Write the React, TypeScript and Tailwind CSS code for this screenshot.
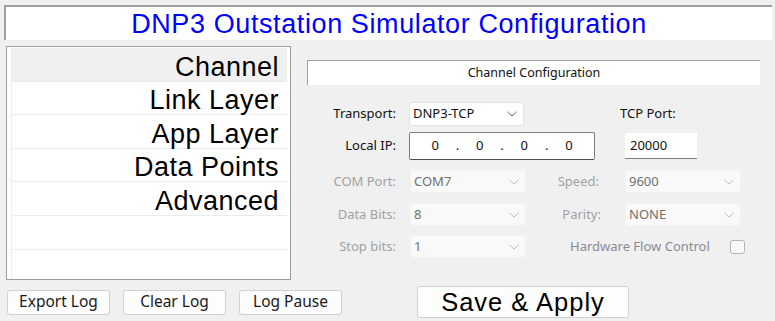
import React from "react";

const NAV_ITEMS = ["Channel", "Link Layer", "App Layer", "Data Points", "Advanced", "", ""];

function Chevron({ color }: { color: string }) {
  return (
    <svg width="10" height="6" viewBox="0 0 10 6" className="shrink-0">
      <polyline points="0.5,0.8 5,5 9.5,0.8" fill="none" stroke={color} strokeWidth="1" />
    </svg>
  );
}

function Dropdown({
  value,
  width,
  disabled,
}: {
  value: string;
  width: string;
  disabled?: boolean;
}) {
  return (
    <div
      className={`flex h-full items-center justify-between rounded-[3px] border pl-[3px] pr-[6px] ${width} ${
        disabled
          ? "border-[#f2f2f2] bg-[#f9f9f9] text-[#707070]"
          : "border-[#e2e2e2] bg-white text-[#111]"
      }`}
    >
      <span>{value}</span>
      <Chevron color={disabled ? "#bdbdbd" : "#6a6a6a"} />
    </div>
  );
}

function Label({ text, width, disabled }: { text: string; width: string; disabled?: boolean }) {
  return (
    <div className={`shrink-0 text-right ${width} ${disabled ? "text-[#a2a2a2]" : "text-[#111]"}`}>
      {text}
    </div>
  );
}

function LogButton({ children }: { children: React.ReactNode }) {
  return (
    <button className="flex h-[25px] w-[103px] items-center justify-center rounded-[3px] border border-[#d0d0d0] bg-[#fdfdfd] text-[15.5px] text-[#1a1a1a] [font-family:'Noto_Sans',sans-serif]">
      {children}
    </button>
  );
}

export default function App() {
  return (
    <div className="h-[321px] w-[775px] overflow-hidden bg-[#f0f0f0] pt-[5px]">
      {/* Title */}
      <div className="ml-[4px] flex h-[35px] w-[768px] items-center justify-center border-l-2 border-t-2 border-[#a0a0a0] bg-white pt-[1px]">
        <span className="text-[27px] tracking-[0.6px] text-[#0000ff] [font-family:'Liberation_Sans',Arial,sans-serif]">
          DNP3 Outstation Simulator Configuration
        </span>
      </div>

      <div className="mt-[6px] flex h-[234px]">
        {/* Left nav list */}
        <div className="ml-[6px] h-[234px] w-[285px] overflow-hidden border border-[#9c9c9c] bg-white pb-0 pl-[4px] pr-[3px] pt-[1px]">
          <div className="h-full border-l border-[#ececec]">
            {NAV_ITEMS.map((item, i) => (
              <div
                key={i}
                className={`flex h-[33.6px] items-center justify-end border-b border-[#ececec] pr-[8px] pt-[5px] text-[27px] tracking-[0.5px] text-black [font-family:'Liberation_Sans',Arial,sans-serif] ${
                  i === 0 ? "bg-[#f0f0f0]" : "bg-white"
                }`}
              >
                {item}
              </div>
            ))}
          </div>
        </div>

        {/* Right config panel */}
        <div className="ml-[16px] pt-[14px] text-[13px] [font-family:'Noto_Sans',sans-serif]">
          <div className="flex h-[25px] w-[453px] items-center justify-center border-l border-t border-[#a0a0a0] bg-white text-[12.5px] text-[#111]">
            Channel Configuration
          </div>

          {/* Transport */}
          <div className="mt-[17px] flex h-[24px] items-center">
            <Label text="Transport:" width="w-[89px]" />
            <div className="ml-[13px] h-full">
              <Dropdown value="DNP3-TCP" width="w-[115px]" />
            </div>
            <div className="ml-[96px] text-[#111]">TCP Port:</div>
          </div>

          {/* Local IP */}
          <div className="mt-[6px] flex h-[28px] items-center">
            <Label text="Local IP:" width="w-[89px]" />
            <div className="ml-[13px] flex h-full w-[186px] items-center rounded-[2px] border border-[#7d7d7d] border-b-[#4f4f4f] bg-white pl-[14px] text-[#111]">
              <span className="w-[22.3px] text-center">0</span>
              <span className="w-[22.3px] text-center">.</span>
              <span className="w-[22.3px] text-center">0</span>
              <span className="w-[22.3px] text-center">.</span>
              <span className="w-[22.3px] text-center">0</span>
              <span className="w-[22.3px] text-center">.</span>
              <span className="w-[22.3px] text-center">0</span>
            </div>
            <div className="ml-[30px] flex h-[26px] w-[72px] items-center border-b border-[#7d7d7d] bg-white pl-[5px] text-[#111]">
              20000
            </div>
          </div>

          {/* COM Port / Speed */}
          <div className="mt-[10px] flex h-[23px] items-center">
            <Label text="COM Port:" width="w-[89px]" disabled />
            <div className="ml-[14px] h-full">
              <Dropdown value="COM7" width="w-[116px]" disabled />
            </div>
            <Label text="Speed:" width="w-[73px]" disabled />
            <div className="ml-[26px] h-full">
              <Dropdown value="9600" width="w-[116px]" disabled />
            </div>
          </div>

          {/* Data Bits / Parity */}
          <div className="mt-[10px] flex h-[23px] items-center">
            <Label text="Data Bits:" width="w-[89px]" disabled />
            <div className="ml-[14px] h-full">
              <Dropdown value="8" width="w-[116px]" disabled />
            </div>
            <Label text="Parity:" width="w-[75px]" disabled />
            <div className="ml-[24px] h-full">
              <Dropdown value="NONE" width="w-[116px]" disabled />
            </div>
          </div>

          {/* Stop bits / HW flow */}
          <div className="mt-[9px] flex h-[23px] items-center">
            <Label text="Stop bits:" width="w-[89px]" disabled />
            <div className="ml-[14px] h-full">
              <Dropdown value="1" width="w-[116px]" disabled />
            </div>
            <div className="ml-[44px] text-[#8a8a96]">Hardware Flow Control</div>
            <div className="ml-[20px] h-[14px] w-[15px] rounded-[3px] border border-[#b4b4b4] bg-[#f9f9f9]" />
          </div>
        </div>
      </div>

      {/* Bottom buttons */}
      <div className="mt-[6px] flex h-[32px] items-center">
        <div className="ml-[7px] flex gap-[13px]">
          <LogButton>Export Log</LogButton>
          <LogButton>Clear Log</LogButton>
          <LogButton>Log Pause</LogButton>
        </div>
        <button className="ml-[75px] flex h-[32px] w-[212px] items-center justify-center rounded-[3px] border border-[#d0d0d0] bg-[#fdfdfd] pt-[1px] text-[25.5px] tracking-[1px] text-black [font-family:'Liberation_Sans',Arial,sans-serif]">
          Save &amp; Apply
        </button>
      </div>
    </div>
  );
}
